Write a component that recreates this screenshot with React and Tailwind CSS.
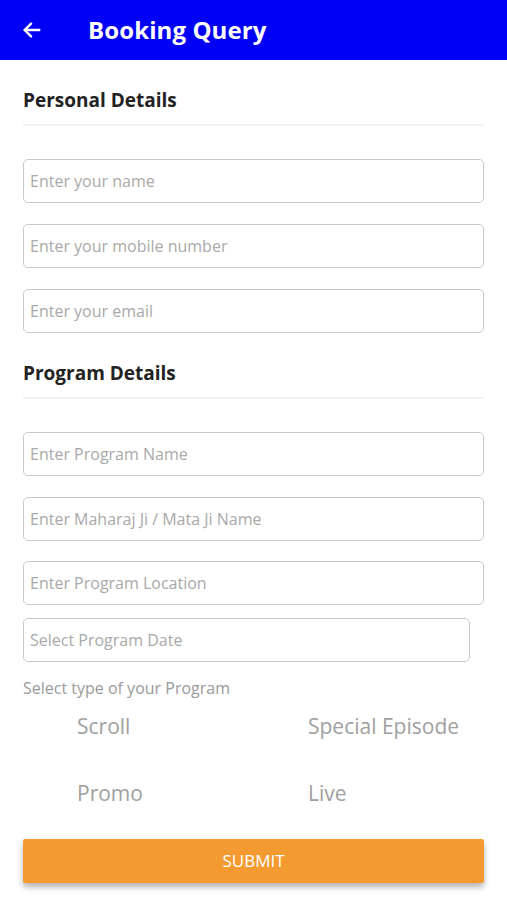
import { useState } from 'react'

const inputCls =
  'block h-[44px] w-full rounded-[5px] border-[1.5px] border-[#c9c9c9] px-[6px] text-[16px] text-[#333] placeholder:text-[#a9a9a9] outline-none'

export default function App() {
  const [type, setType] = useState('')

  return (
    <div className="min-h-screen w-full bg-white" style={{ fontFamily: '"Open Sans", "Noto Sans", sans-serif' }}>
      <header className="flex h-[60px] items-center bg-[#0000f5] text-white">
        <button className="ml-[20px] flex h-[24px] w-[24px] items-center justify-center">
          <svg width="22" height="22" viewBox="0 0 24 24" fill="none" stroke="white" strokeWidth="2.6" strokeLinecap="round" strokeLinejoin="round">
            <path d="M20 12H4" />
            <path d="M11 5l-7 7 7 7" />
          </svg>
        </button>
        <h1 className="ml-[44px] text-[24px] font-bold tracking-[0.1px]">Booking Query</h1>
      </header>

      <div className="px-[23px]">
        <h2 className="mt-[26px] text-[19px] font-bold leading-[28px] text-[#222]">Personal Details</h2>
        <div className="mt-[10px] h-[2px] bg-[#f1f1f1]" />

        <div className="mt-[33px] flex flex-col gap-[21px]">
          <input className={inputCls} placeholder="Enter your name" />
          <input className={inputCls} placeholder="Enter your mobile number" />
          <input className={inputCls} placeholder="Enter your email" />
        </div>

        <h2 className="mt-[26px] text-[19px] font-bold leading-[28px] text-[#222]">Program Details</h2>
        <div className="mt-[10px] h-[2px] bg-[#f1f1f1]" />

        <div className="mt-[33px] flex flex-col gap-[20.5px]">
          <input className={inputCls} placeholder="Enter Program Name" />
          <input className={inputCls} placeholder="Enter Maharaj Ji / Mata Ji Name" />
          <input className={inputCls} placeholder="Enter Program Location" />
        </div>
        <input className={inputCls + ' mt-[13px] !w-[447px]'} placeholder="Select Program Date" />

        <p className="mt-[15px] text-[16px] leading-[22px] text-[#9a9a9a]">Select type of your Program</p>

        <div className="mt-[13px] grid grid-cols-[231px_1fr] gap-y-[38px] pl-[54px] text-[21px] leading-[29px] text-[#a0a0a0]">
          {['Scroll', 'Special Episode', 'Promo', 'Live'].map((t) => (
            <button key={t} onClick={() => setType(t)} className={'text-left ' + (type === t ? 'text-[#f39a30]' : '')}>
              {t}
            </button>
          ))}
        </div>

        <button className="mt-[31px] h-[44px] w-full rounded-[2px] bg-[#f39a30] text-[17px] text-white shadow-[0_4px_6px_rgba(0,0,0,0.3)]">
          SUBMIT
        </button>
      </div>
    </div>
  )
}
